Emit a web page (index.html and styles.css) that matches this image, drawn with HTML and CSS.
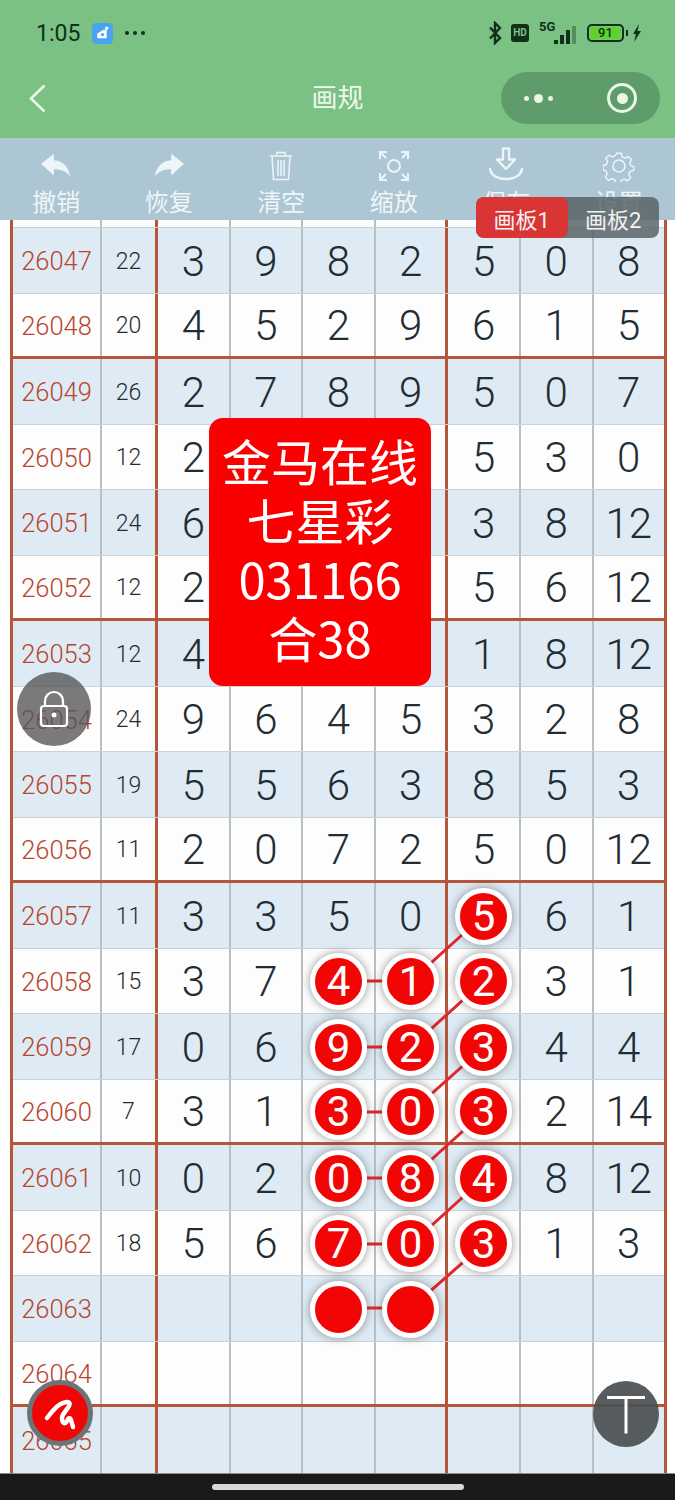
FILE: index.html
```html
<!DOCTYPE html>
<html lang="zh-CN">
<head>
  <meta charset="UTF-8">
  <title>画规</title>
  <link rel="stylesheet" href="styles.css">
</head>
<body>
  <div class="page">
    <header class="head">
      <div class="status">
        <div class="status-left">
          <span class="time">1:05</span>
          <svg class="app-icon" viewBox="0 0 20 20"><rect width="20" height="20" rx="4" fill="#4aa3f0"/><path d="M5 10l6-3.500 3 0 0 8-9 0z" fill="#fff"/><circle cx="14" cy="5" r="1.600" fill="#fff"/><circle cx="10" cy="11" r="1.500" fill="#4aa3f0"/></svg>
          <span class="status-dots"><i></i><i></i><i></i></span>
        </div>
        <div class="status-right">
          <svg class="bt" viewBox="0 0 15 24"><path d="M2 6.500l10 10.500-5 5V2l5 5L2 17.500" fill="none" stroke="#10301a" stroke-width="2.400"/></svg>
          <span class="hd">HD</span>
          <span class="signal">
            <span class="five-g">5G</span>
            <i class="s1"></i><i class="s2"></i><i class="s3"></i><i class="s4"></i>
          </span>
          <span class="battery"><span class="battery-num">91</span></span>
          <svg class="bolt" viewBox="0 0 10 18"><path d="M7 0L1 10h3l-2 8 7-11H5.500z" fill="#10301a"/></svg>
        </div>
      </div>
      <div class="nav">
        <svg class="back" viewBox="0 0 17 29"><path d="M15.500 1.500L2 14.500l13.500 13" fill="none" stroke="#eaf6e6" stroke-width="2.600"/></svg>
        <div class="title">画规</div>
        <div class="capsule">
          <span class="capsule-dots"><i></i><i class="big"></i><i></i></span>
          <span class="capsule-target"></span>
        </div>
      </div>
    </header>

    <nav class="tools">
      <div class="tool">
        <svg viewBox="0 0 30 28"><path d="M1 12L13 2.500v6c9 .5 14 7 15.500 15.500C25 19 20 17 13 17v6z" fill="#eef5f8"/></svg>
        <span>撤销</span>
      </div>
      <div class="tool">
        <svg viewBox="0 0 30 28"><path d="M29 12L17 2.500v6C8 9 3 15.500 1.500 24 5 19 10 17 17 17v6z" fill="#eef5f8"/></svg>
        <span>恢复</span>
      </div>
      <div class="tool">
        <svg viewBox="0 0 30 32" fill="none" stroke="#eef5f8" stroke-width="1.500"><path d="M4 6h22M11 6V2.500h8V6M6 6l1.500 23.500h15L24 6M12 10v16M15 10v16M18 10v16"/></svg>
        <span>清空</span>
      </div>
      <div class="tool">
        <svg viewBox="0 0 32 32" fill="none" stroke="#eef5f8" stroke-width="2"><circle cx="16" cy="16" r="6"/><path d="M2 9V2h7M2 2l6 6M23 2h7v7M30 2l-6 6M2 23v7h7M2 30l6-6M30 23v7h-7M30 30l-6-6"/></svg>
        <span>缩放</span>
      </div>
      <div class="tool">
        <svg class="save-icon" viewBox="0 0 36 34" fill="none" stroke="#eef5f8" stroke-width="2.400"><path d="M15 1.500h6v11h6L18 22 9 12.500h6zM2 22c1 6 7 10 16 10S33 28 34 22" stroke-linejoin="round" stroke-linecap="round"/></svg>
        <span>保存</span>
      </div>
      <div class="tool">
        <svg viewBox="0 0 32 32" fill="none" stroke="#eef5f8" stroke-width="1.600"><circle cx="16" cy="16" r="6"/><path d="M13.500 2h5l1 4 3.500 1.500 3.500-2 3.500 3.500-2 3.500 1.500 3.500 3 1v4l-4 1-1.500 3.500 2 3.500-3.500 3.500-3.500-2-3.500 1.500-1 3h-5l-1-3.500-3.500-1.500-3.500 2-3.500-3.500 2-3.500-1.500-3.500-3-1v-5l3.500-1 1.500-3.500-2-3.500 3.500-3.500 3.500 2 3.500-1.500z" transform="translate(1.500 1.500) scale(.9)"/></svg>
        <span>设置</span>
      </div>
    </nav>

    <main class="board">
      <div class="row stub"><div></div><div></div><div></div><div></div><div></div><div></div><div></div><div></div><div></div></div>
      <div class="row alt"><div class="no">26047</div><div class="sum">22</div><div>3</div><div>9</div><div>8</div><div>2</div><div>5</div><div>0</div><div>8</div></div>
      <div class="row sep"><div class="no">26048</div><div class="sum">20</div><div>4</div><div>5</div><div>2</div><div>9</div><div>6</div><div>1</div><div>5</div></div>
      <div class="row alt"><div class="no">26049</div><div class="sum">26</div><div>2</div><div>7</div><div>8</div><div>9</div><div>5</div><div>0</div><div>7</div></div>
      <div class="row"><div class="no">26050</div><div class="sum">12</div><div>2</div><div></div><div></div><div></div><div>5</div><div>3</div><div>0</div></div>
      <div class="row alt"><div class="no">26051</div><div class="sum">24</div><div>6</div><div></div><div></div><div></div><div>3</div><div>8</div><div>12</div></div>
      <div class="row sep"><div class="no">26052</div><div class="sum">12</div><div>2</div><div></div><div></div><div></div><div>5</div><div>6</div><div>12</div></div>
      <div class="row alt"><div class="no">26053</div><div class="sum">12</div><div>4</div><div></div><div></div><div></div><div>1</div><div>8</div><div>12</div></div>
      <div class="row"><div class="no">26054</div><div class="sum">24</div><div>9</div><div>6</div><div>4</div><div>5</div><div>3</div><div>2</div><div>8</div></div>
      <div class="row alt"><div class="no">26055</div><div class="sum">19</div><div>5</div><div>5</div><div>6</div><div>3</div><div>8</div><div>5</div><div>3</div></div>
      <div class="row sep"><div class="no">26056</div><div class="sum">11</div><div>2</div><div>0</div><div>7</div><div>2</div><div>5</div><div>0</div><div>12</div></div>
      <div class="row alt"><div class="no">26057</div><div class="sum">11</div><div>3</div><div>3</div><div>5</div><div>0</div><div><b class="ball">5</b></div><div>6</div><div>1</div></div>
      <div class="row"><div class="no">26058</div><div class="sum">15</div><div>3</div><div>7</div><div><b class="ball">4</b></div><div><b class="ball">1</b></div><div><b class="ball">2</b></div><div>3</div><div>1</div></div>
      <div class="row alt"><div class="no">26059</div><div class="sum">17</div><div>0</div><div>6</div><div><b class="ball">9</b></div><div><b class="ball">2</b></div><div><b class="ball">3</b></div><div>4</div><div>4</div></div>
      <div class="row sep"><div class="no">26060</div><div class="sum">7</div><div>3</div><div>1</div><div><b class="ball">3</b></div><div><b class="ball">0</b></div><div><b class="ball">3</b></div><div>2</div><div>14</div></div>
      <div class="row alt"><div class="no">26061</div><div class="sum">10</div><div>0</div><div>2</div><div><b class="ball">0</b></div><div><b class="ball">8</b></div><div><b class="ball">4</b></div><div>8</div><div>12</div></div>
      <div class="row"><div class="no">26062</div><div class="sum">18</div><div>5</div><div>6</div><div><b class="ball">7</b></div><div><b class="ball">0</b></div><div><b class="ball">3</b></div><div>1</div><div>3</div></div>
      <div class="row alt"><div class="no">26063</div><div class="sum"></div><div></div><div></div><div><b class="ball"></b></div><div><b class="ball"></b></div><div></div><div></div><div></div></div>
      <div class="row sep"><div class="no">26064</div><div class="sum"></div><div></div><div></div><div></div><div></div><div></div><div></div><div></div></div>
      <div class="row alt last"><div class="no">26065</div><div class="sum"></div><div></div><div></div><div></div><div></div><div></div><div></div><div></div></div>
    </main>

    <footer class="sysbar"><span class="pill"></span></footer>

    <!-- lines joining the circled numbers, they sit under the balls -->
    <svg class="links" viewBox="0 0 675 1500" stroke="#e3262b" stroke-width="3">
      <path d="M338 981H411L484 915M338 1047H411L484 981M338 1112H411L484 1047M338 1178H411L484 1112M338 1244H411L484 1178M338 1308H411L484 1244"/>
    </svg>

    <div class="tabs">
      <span class="tab on">画板1</span>
      <span class="tab">画板2</span>
    </div>

    <div class="promo">金马在线<br>七星彩<br>031166<br>合38</div>

    <div class="lock">
      <svg viewBox="0 0 30 38" fill="none" stroke="#fff" stroke-width="2.200"><path d="M6 16V11a9 9 0 0 1 18 0v5"/><rect x="2" y="16" width="26" height="20" rx="3"/><circle cx="15" cy="25" r="2.500" fill="#fff" stroke="none"/></svg>
    </div>

    <div class="pen">
      <svg viewBox="0 0 66 66" fill="none" stroke="#fff" stroke-width="4.500" stroke-linecap="round" stroke-linejoin="round"><path d="M20 38C26 30 31 24 36 23C41 21 44 22 42 26C40 30 35 34 35 38C35 43 38 45 40 41C41 38 43 37 44 40L46 47"/></svg>
    </div>

    <div class="totop">
      <svg viewBox="0 0 66 66" stroke="#fff" stroke-width="3"><path d="M14 16.500h38M33 16.500v36"/></svg>
    </div>
  </div>
</body>
</html>
```

FILE: styles.css
```css
* {
  box-sizing: border-box;
}

body {
  margin: 0;
  background-color: #fff;
  font-family: Roboto, "Noto Sans CJK SC", sans-serif;
}

.page {
  position: relative;
  width: 675px;
  height: 1500px;
  overflow: hidden;
  display: flex;
  flex-direction: column;
}

/* green header */
.head {
  height: 138px;
  flex: none;
  background-color: #7bc184;
}

.status {
  height: 66px;
  padding: 0 33px 0 36px;
  display: flex;
  justify-content: space-between;
  align-items: center;
}

.status-left,
.status-right {
  display: flex;
  align-items: center;
}

.time {
  font-size: 23px;
  color: #10301a;
}

.app-icon {
  width: 21px;
  height: 21px;
  margin-left: 12px;
}

.status-dots {
  display: flex;
  gap: 4px;
  margin-left: 12px;
}

.status-dots i {
  width: 4px;
  height: 4px;
  border-radius: 50%;
  background-color: #10301a;
}

.bt {
  width: 15px;
  height: 24px;
}

.hd {
  width: 18px;
  height: 18px;
  margin-left: 8px;
  border-radius: 3px;
  background-color: #10301a;
  color: #7bc184;
  font-size: 10px;
  font-weight: 700;
  line-height: 18px;
  text-align: center;
}

.signal {
  position: relative;
  width: 37px;
  height: 22px;
  margin-left: 10px;
  display: flex;
  justify-content: flex-end;
  align-items: flex-end;
  gap: 2px;
}

.five-g {
  position: absolute;
  left: 0;
  top: -3px;
  font-size: 13px;
  font-weight: 700;
  color: #10301a;
}

.signal i {
  width: 4px;
  background-color: #10301a;
}

.signal .s1 { height: 4px; }
.signal .s2 { height: 9px; }
.signal .s3 { height: 14px; }
.signal .s4 { height: 18px; opacity: .35; }

.battery {
  position: relative;
  width: 37px;
  height: 18px;
  margin-left: 11px;
  border: 2px solid #10301a;
  border-radius: 5px;
  padding: 1px;
  display: flex;
}

.battery::after {
  content: "";
  position: absolute;
  right: -6px;
  top: 4px;
  width: 2px;
  height: 6px;
  background-color: #10301a;
}

.battery-num {
  flex: 1;
  border-radius: 2px;
  background-color: #5fd22d;
  color: #10301a;
  font-size: 13px;
  font-weight: 500;
  line-height: 12px;
  text-align: center;
}

.bolt {
  width: 10px;
  height: 18px;
  margin-left: 8px;
}

.nav {
  position: relative;
  height: 72px;
  padding: 0 15px 8px 29px;
  display: flex;
  justify-content: space-between;
  align-items: center;
}

.back {
  width: 17px;
  height: 29px;
}

.title {
  position: absolute;
  left: 0;
  right: 0;
  top: 13px;
  font-size: 26px;
  line-height: 38px;
  text-align: center;
  color: #f0f8ec;
}

.capsule {
  width: 159px;
  height: 52px;
  padding: 0 23px 0 23px;
  border-radius: 26px;
  background-color: #5f9c6b;
  display: flex;
  justify-content: space-between;
  align-items: center;
}

.capsule-dots {
  display: flex;
  align-items: center;
  gap: 5px;
}

.capsule-dots i {
  width: 5px;
  height: 5px;
  border-radius: 50%;
  background-color: #eaf6e6;
}

.capsule-dots i.big {
  width: 9px;
  height: 9px;
}

.capsule-target {
  width: 30px;
  height: 30px;
  border: 3px solid #eaf6e6;
  border-radius: 50%;
  display: flex;
  align-items: center;
  justify-content: center;
}

.capsule-target::after {
  content: "";
  width: 11px;
  height: 11px;
  border-radius: 50%;
  background-color: #eaf6e6;
}

/* tool row */
.tools {
  height: 82px;
  flex: none;
  background-color: #adc6d3;
  display: grid;
  grid-template-columns: repeat(6, 1fr);
}

.tool {
  height: 82px;
  overflow: hidden;
  padding-top: 12px;
  display: flex;
  flex-direction: column;
  align-items: center;
  color: #eef5f8;
  font-size: 24px;
  line-height: 34px;
}

.tool svg {
  width: 32px;
  height: 32px;
  flex: none;
}

.tool svg.save-icon {
  width: 36px;
  height: 34px;
  margin: -3px 0 1px;
}

.tool span {
  margin-top: 4px;
}

/* number table */
.board {
  width: 657px;
  height: 1252.500px;
  flex: none;
  margin-left: 10px;
  border-left: 3px solid #b5563a;
  border-right: 3px solid #b5563a;
  background-color: #fdfdfd;
}

.row {
  height: 65.500px;
  display: grid;
  grid-template-columns: 89px 56px repeat(6, 72.600px) 70.400px;
  border-bottom: 1px solid #c9d2d7;
  color: #222c33;
  font-size: 42px;
  font-weight: 300;
}

.row.alt {
  background-color: #deebf4;
}

.row.sep {
  border-bottom: 3px solid #b5563a;
}

.row.stub {
  height: 8px;
}

.row.last {
  border-bottom: 0;
}

.row > div {
  display: flex;
  align-items: center;
  justify-content: center;
  padding-top: 2px;
  border-right: 2px solid #b7bfc3;
}

.row > div:nth-child(2),
.row > div:nth-child(6) {
  border-right: 3px solid #b5563a;
}

.row > div:last-child {
  border-right: 0;
}

.row > .no {
  color: #b8452f;
  font-size: 25.500px;
}

.row > .sum {
  font-size: 23px;
}

.ball {
  position: relative;
  z-index: 2;
  width: 57px;
  height: 57px;
  flex: none;
  border: 5px solid #fff;
  border-radius: 50%;
  background-color: #f20505;
  box-shadow: 0 0 8px rgba(60, 60, 60, .55);
  color: #fff;
  font-weight: 400;
  line-height: 47px;
  text-align: center;
}

.links {
  position: absolute;
  left: 0;
  top: 0;
  width: 675px;
  height: 1500px;
  z-index: 1;
  fill: none;
}

.sysbar {
  flex: 1;
  background-color: #1a1a1a;
  border-top: 1px solid #8a8a8a;
  display: flex;
  justify-content: center;
  padding-top: 10px;
}

.pill {
  width: 252px;
  height: 6px;
  border-radius: 3px;
  background-color: #d8d8d8;
}

/* floating things */
.tabs {
  position: absolute;
  left: 476px;
  top: 197px;
  z-index: 3;
  width: 183px;
  height: 41px;
  display: flex;
  border-radius: 8px;
  background-color: rgba(85, 95, 100, .82);
}

.tab {
  flex: 1;
  border-radius: 8px;
  color: #f2f2f2;
  font-size: 22px;
  line-height: 48px;
  text-align: center;
}

.tab.on {
  background-color: #d93535;
}

.promo {
  position: absolute;
  left: 209px;
  top: 418px;
  z-index: 3;
  width: 222px;
  height: 268px;
  padding-top: 12px;
  border-radius: 14px;
  background-color: #fb0000;
  color: #fff;
  font-family: "Noto Sans CJK SC", sans-serif;
  font-size: 49px;
  line-height: 59px;
  text-align: center;
}

.lock,
.pen,
.totop {
  position: absolute;
  z-index: 3;
  border-radius: 50%;
}

.lock {
  left: 17px;
  top: 672px;
  width: 74px;
  height: 74px;
  padding: 18px 0 0 22px;
  background-color: rgba(85, 85, 85, .78);
}

.lock svg {
  display: block;
  width: 30px;
  height: 38px;
}

.pen {
  left: 27px;
  top: 1380px;
  width: 66px;
  height: 66px;
  border: 5px solid #6c7478;
  background-color: #f20505;
}

.pen svg {
  display: block;
  width: 66px;
  height: 66px;
  margin: -5px;
}

.totop {
  left: 593px;
  top: 1381px;
  width: 66px;
  height: 66px;
  background-color: rgba(75, 80, 82, .93);
}

.totop svg {
  display: block;
}
```
